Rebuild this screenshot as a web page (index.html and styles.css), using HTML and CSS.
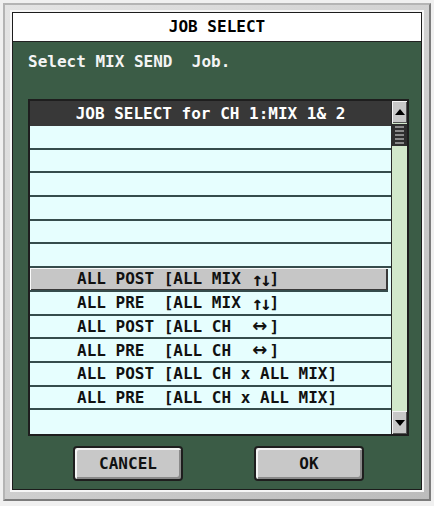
FILE: index.html
```html
<!DOCTYPE html>
<html lang="en">
<head>
    <meta charset="UTF-8">
    <meta name="viewport" content="width=device-width, initial-scale=1.0">
    <title>JOB SELECT</title>
    <link rel="stylesheet" href="styles.css">
</head>
<body>

    <div class="frame">
        <div class="panel">
            <div class="title">JOB SELECT</div>

            <div class="content">
                <div class="prompt">Select MIX SEND&nbsp; Job.</div>

                <div class="list">
                    <div class="table">
                        <div class="head">JOB SELECT for CH 1:MIX 1&amp; 2</div>
                        <div class="rows">
                            <div class="row"></div>
                            <div class="row"></div>
                            <div class="row"></div>
                            <div class="row"></div>
                            <div class="row"></div>
                            <div class="row"></div>
                            <div class="row selected">ALL POST [ALL MIX <span class="arr">↑↓</span>]</div>
                            <div class="row">ALL PRE&nbsp; [ALL MIX <span class="arr">↑↓</span>]</div>
                            <div class="row">ALL POST [ALL CH&nbsp;&nbsp;<span class="arr lr">↔</span>]</div>
                            <div class="row">ALL PRE&nbsp; [ALL CH&nbsp;&nbsp;<span class="arr lr">↔</span>]</div>
                            <div class="row">ALL POST [ALL CH x ALL MIX]</div>
                            <div class="row">ALL PRE&nbsp; [ALL CH x ALL MIX]</div>
                            <div class="row last"></div>
                        </div>
                    </div>

                    <div class="scroll">
                        <div class="scroll-btn">
                            <svg width="10" height="6" viewBox="0 0 10 6"><path d="M5 0 L10 6 L0 6 Z" fill="#000"/></svg>
                        </div>
                        <div class="thumb">
                            <span></span><span></span><span></span><span></span><span></span>
                        </div>
                        <div class="track"></div>
                        <div class="scroll-btn down">
                            <svg width="10" height="6" viewBox="0 0 10 6"><path d="M0 0 L10 0 L5 6 Z" fill="#000"/></svg>
                        </div>
                    </div>
                </div>

                <div class="buttons">
                    <button class="btn">CANCEL</button>
                    <button class="btn">OK</button>
                </div>
            </div>
        </div>
    </div>

</body>
</html>
```

FILE: styles.css
```css
body {
    margin: 0;
    padding: 3px;
    background: #f0f0f0;
    font-family: "DejaVu Sans Mono", "Liberation Mono", monospace;
    font-weight: bold;
    font-size: 16px;
}
.frame {
    box-sizing: border-box;
    width: 428px;
    height: 498px;
    border: 2px solid;
    border-color: #b4b4b4 #7c7c7c #7c7c7c #b4b4b4;
    padding: 7px 7px 9px 7px;
    background: linear-gradient(135deg, #e4e4e4, #bcbcbc);
}
.panel {
    box-sizing: border-box;
    height: 100%;
    border: 1px solid #1c1c1c;
    box-shadow: 0 0 0 2px #f6f6f6;
    display: flex;
    flex-direction: column;
}
.title {
    height: 28px;
    line-height: 28px;
    background: #fff;
    border-bottom: 1px solid #222;
    text-align: center;
    color: #000;
}
.content {
    flex: 1;
    background: #3b5c46;
    padding: 10px 0 0 15px;
}
.prompt {
    color: #f4f4f4;
    line-height: 20px;
}
.list {
    display: flex;
    width: 381px;
    box-sizing: border-box;
    margin-top: 27px;
    border: 2px solid #1e1e1e;
}
.table {
    flex: 1;
    display: flex;
    flex-direction: column;
}
.head {
    height: 25px;
    line-height: 26px;
    background: #383838;
    color: #fff;
    text-align: center;
    white-space: pre;
}
.rows {
    height: 308px;
    display: grid;
    grid-template-rows: repeat(13, 1fr);
    background: #e6fefe;
}
.row {
    border-bottom: 2px solid #364c4c;
    padding-left: 47px;
    display: flex;
    align-items: center;
    color: #111;
    white-space: pre;
}
.row.last {
    border-bottom: none;
}
.row.selected {
    background: #c6c6c6;
    margin-right: 3px;
    box-shadow: inset 1px 1px 0 #fafafa, inset -2px -1px 0 #3a3a3a;
}
.arr {
    display: inline-block;
    width: 19px;
    font-size: 19px;
    line-height: 16px;
    letter-spacing: -3px;
    text-align: center;
}
.arr.lr {
    font-family: "DejaVu Sans", sans-serif;
    font-size: 18px;
    letter-spacing: 0;
}
.scroll {
    width: 16px;
    display: flex;
    flex-direction: column;
    background: #d2e8cb;
    border-left: 1px solid #2a2a2a;
    box-sizing: border-box;
}
.scroll-btn {
    height: 22px;
    background: #c8c8c8;
    box-shadow: inset 1px 1px 0 #f4f4f4, inset -1px -1px 0 #555;
    display: flex;
    align-items: center;
    justify-content: center;
}
.scroll-btn.down {
    height: 23px;
}
.thumb {
    height: 22px;
    margin-top: 1px;
    background: #2e2e2e;
    display: flex;
    flex-direction: column;
    justify-content: center;
    gap: 2px;
    padding: 0 3px;
}
.thumb span {
    height: 2px;
    background: #8a8a8a;
}
.track {
    flex: 1;
}
.buttons {
    display: flex;
    gap: 71px;
    margin: 10px 0 0 45px;
}
.btn {
    width: 110px;
    height: 35px;
    background: #c8c8c8;
    border: 2px solid #1e1e1e;
    border-radius: 4px;
    box-shadow: inset 2px 2px 0 #f4f4f4, inset -2px -2px 0 #8a8a8a;
    font-family: "DejaVu Sans Mono", "Liberation Mono", monospace;
    font-weight: bold;
    font-size: 16px;
    color: #111;
    padding: 0;
}
```
